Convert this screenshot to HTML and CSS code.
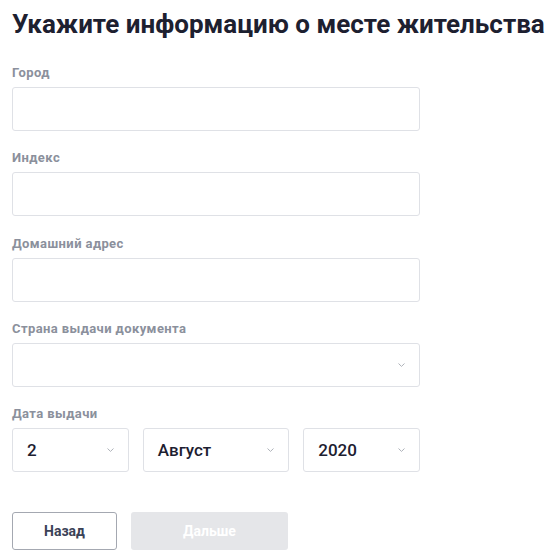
FILE: index.html
```html
<!DOCTYPE html>
<html lang="ru">
<head>
<meta charset="utf-8">
<title>Место жительства</title>
<link rel="stylesheet" href="styles.css">
</head>
<body>
<main class="page">
  <h1 class="title">Укажите информацию о месте жительства</h1>
  <div class="field">
    <label class="label">Город</label>
    <div class="input"></div>
  </div>
  <div class="field">
    <label class="label">Индекс</label>
    <div class="input"></div>
  </div>
  <div class="field">
    <label class="label">Домашний адрес</label>
    <div class="input"></div>
  </div>
  <div class="field">
    <label class="label">Страна выдачи документа</label>
    <div class="input select">
      <span class="value"></span>
      <svg class="chev" width="7" height="4" viewBox="0 0 7 4"><path d="M0.5 0.5 L3.5 3.4 L6.5 0.5" fill="none" stroke="#aeb2b9" stroke-width="1"/></svg>
    </div>
  </div>
  <div class="field">
    <label class="label">Дата выдачи</label>
    <div class="date-row">
      <div class="input select day">
        <span class="value">2</span>
        <svg class="chev" width="7" height="4" viewBox="0 0 7 4"><path d="M0.5 0.5 L3.5 3.4 L6.5 0.5" fill="none" stroke="#aeb2b9" stroke-width="1"/></svg>
      </div>
      <div class="input select month">
        <span class="value">Август</span>
        <svg class="chev" width="7" height="4" viewBox="0 0 7 4"><path d="M0.5 0.5 L3.5 3.4 L6.5 0.5" fill="none" stroke="#aeb2b9" stroke-width="1"/></svg>
      </div>
      <div class="input select year">
        <span class="value">2020</span>
        <svg class="chev" width="7" height="4" viewBox="0 0 7 4"><path d="M0.5 0.5 L3.5 3.4 L6.5 0.5" fill="none" stroke="#aeb2b9" stroke-width="1"/></svg>
      </div>
    </div>
  </div>
  <div class="actions">
    <button class="btn btn-back">Назад</button>
    <button class="btn btn-next" disabled>Дальше</button>
  </div>
</main>
</body>
</html>
```

FILE: styles.css
```css
html, body {
  margin: 0;
  padding: 0;
  background: #ffffff;
}
body {
  font-family: Roboto, "Noto Sans", "Liberation Sans", sans-serif;
  color: #1d2030;
}
.page {
  padding: 8px 12px 0 12px;
}
.title {
  margin: 0 0 25px 0;
  font-size: 26px;
  line-height: 32px;
  font-weight: 700;
  color: #1d2030;
  white-space: nowrap;
}
.field {
  display: flex;
  flex-direction: column;
  width: 408px;
  margin-bottom: 19.3px;
}
.label {
  font-size: 13px;
  line-height: 16px;
  font-weight: 700;
  letter-spacing: 0.4px;
  color: #8b909c;
  margin-bottom: 6px;
}
.input {
  box-sizing: border-box;
  height: 44px;
  border: 1px solid #dfe1e6;
  border-radius: 3px;
  background: #fff;
}
.select {
  display: flex;
  align-items: center;
  justify-content: space-between;
  padding: 0 14px 0 14px;
}
.value {
  font-size: 17px;
  font-weight: 500;
  color: #1d2030;
}
.chev {
  display: block;
}
.date-row {
  display: flex;
  gap: 14px;
}
.day { width: 117px; }
.month { width: 147px; }
.year { width: 117px; }
.actions {
  display: flex;
  gap: 14px;
  margin-top: 40px;
}
.btn {
  box-sizing: border-box;
  height: 38px;
  border-radius: 3px;
  font-family: Roboto, "Noto Sans", "Liberation Sans", sans-serif;
  font-size: 14px;
  font-weight: 700;
  padding: 0;
}
.btn-back {
  width: 105px;
  background: #fff;
  border: 1.5px solid #a4a8b1;
  color: #3b4257;
}
.btn-next {
  width: 157px;
  background: #e5e6e9;
  border: none;
  color: #ffffff;
}
```
